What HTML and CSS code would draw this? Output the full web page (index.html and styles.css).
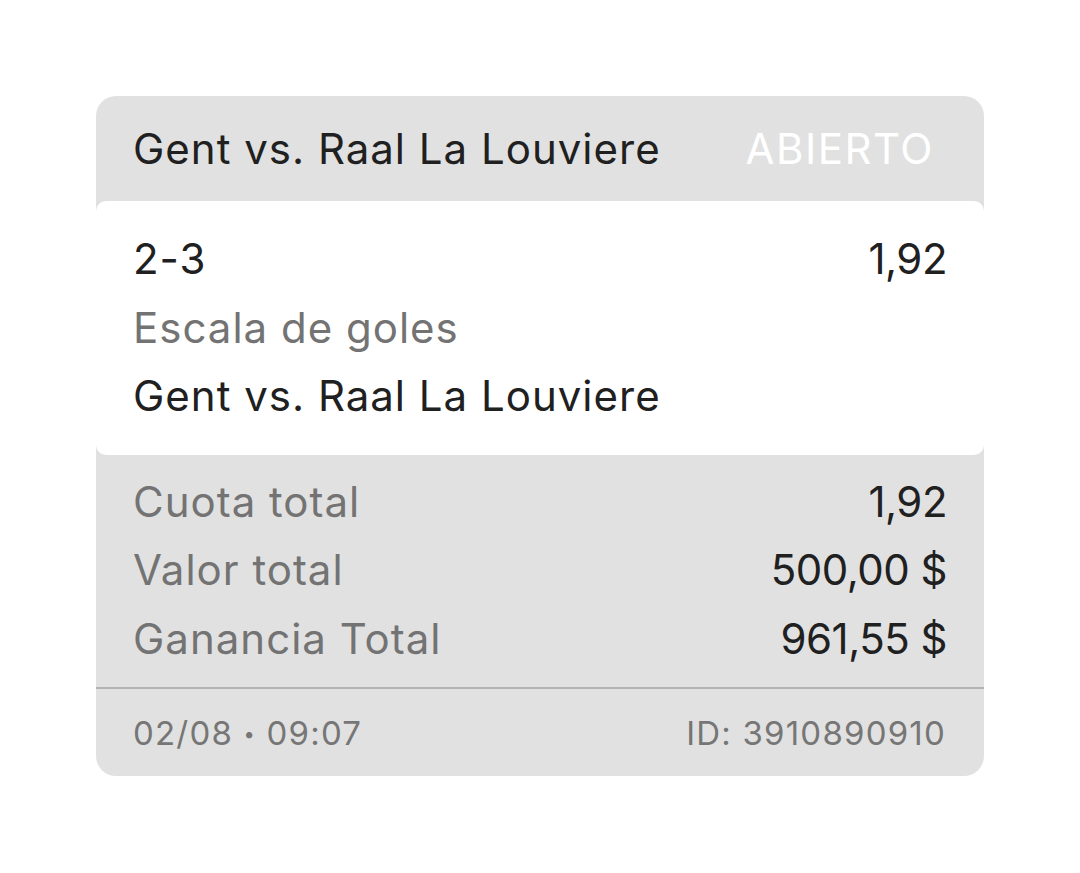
FILE: index.html
```html
<!DOCTYPE html>
<html>
<head>
    <title>Apuesta</title>
    <link rel="stylesheet" href="styles.css">
</head>
<body>
    <div class="ticket">
        <div class="ticket-header">
            <span class="match">Gent vs. Raal La Louviere</span>
            <span class="status">ABIERTO</span>
        </div>

        <div class="selection">
            <div class="row">
                <span class="dark">2-3</span>
                <span class="dark value">1,92</span>
            </div>
            <div class="row">
                <span class="muted">Escala de goles</span>
            </div>
            <div class="row">
                <span class="dark">Gent vs. Raal La Louviere</span>
            </div>
        </div>

        <div class="summary">
            <div class="row">
                <span class="muted">Cuota total</span>
                <span class="dark value">1,92</span>
            </div>
            <div class="row">
                <span class="muted">Valor total</span>
                <span class="dark value">500,00 $</span>
            </div>
            <div class="row">
                <span class="muted">Ganancia Total</span>
                <span class="dark value">961,55 $</span>
            </div>
        </div>

        <div class="ticket-footer">
            <span>02/08 <span class="dot">&bull;</span> 09:07</span>
            <span>ID: 3910890910</span>
        </div>
    </div>
</body>
</html>
```

FILE: styles.css
```css
body {
    margin: 0;
    background-color: #ffffff;
    font-family: Inter, "Noto Sans", sans-serif;
    color: #202020;
}

.ticket {
    width: 888px;
    margin: 96px 0 0 96px;
    background-color: #e1e1e1;
    border-radius: 20px;
    overflow: hidden;
    letter-spacing: 1px;
}

.ticket-header {
    height: 105px;
    display: flex;
    justify-content: space-between;
    align-items: center;
    padding: 0 50px 0 37px;
    box-sizing: border-box;
    font-size: 42px;
}

.status {
    color: #ffffff;
    letter-spacing: 1.5px;
}

.selection {
    background-color: #ffffff;
    border-radius: 10px;
    padding: 24px 37px 24px 37px;
}

.row {
    display: flex;
    justify-content: space-between;
    font-size: 42px;
    line-height: 68.5px;
}

.dark {
    color: #202020;
}

.muted {
    color: #737373;
}

.value {
    letter-spacing: -0.5px;
}

.summary {
    padding: 13px 37px 14px 37px;
    border-bottom: 2px solid #b4b4b4;
}

.ticket-footer {
    display: flex;
    justify-content: space-between;
    padding: 0 38px 0 37px;
    height: 87px;
    align-items: center;
    font-size: 33px;
    letter-spacing: 1.2px;
    color: #767676;
}

.dot {
    font-size: 20px;
    vertical-align: 4px;
}
```
